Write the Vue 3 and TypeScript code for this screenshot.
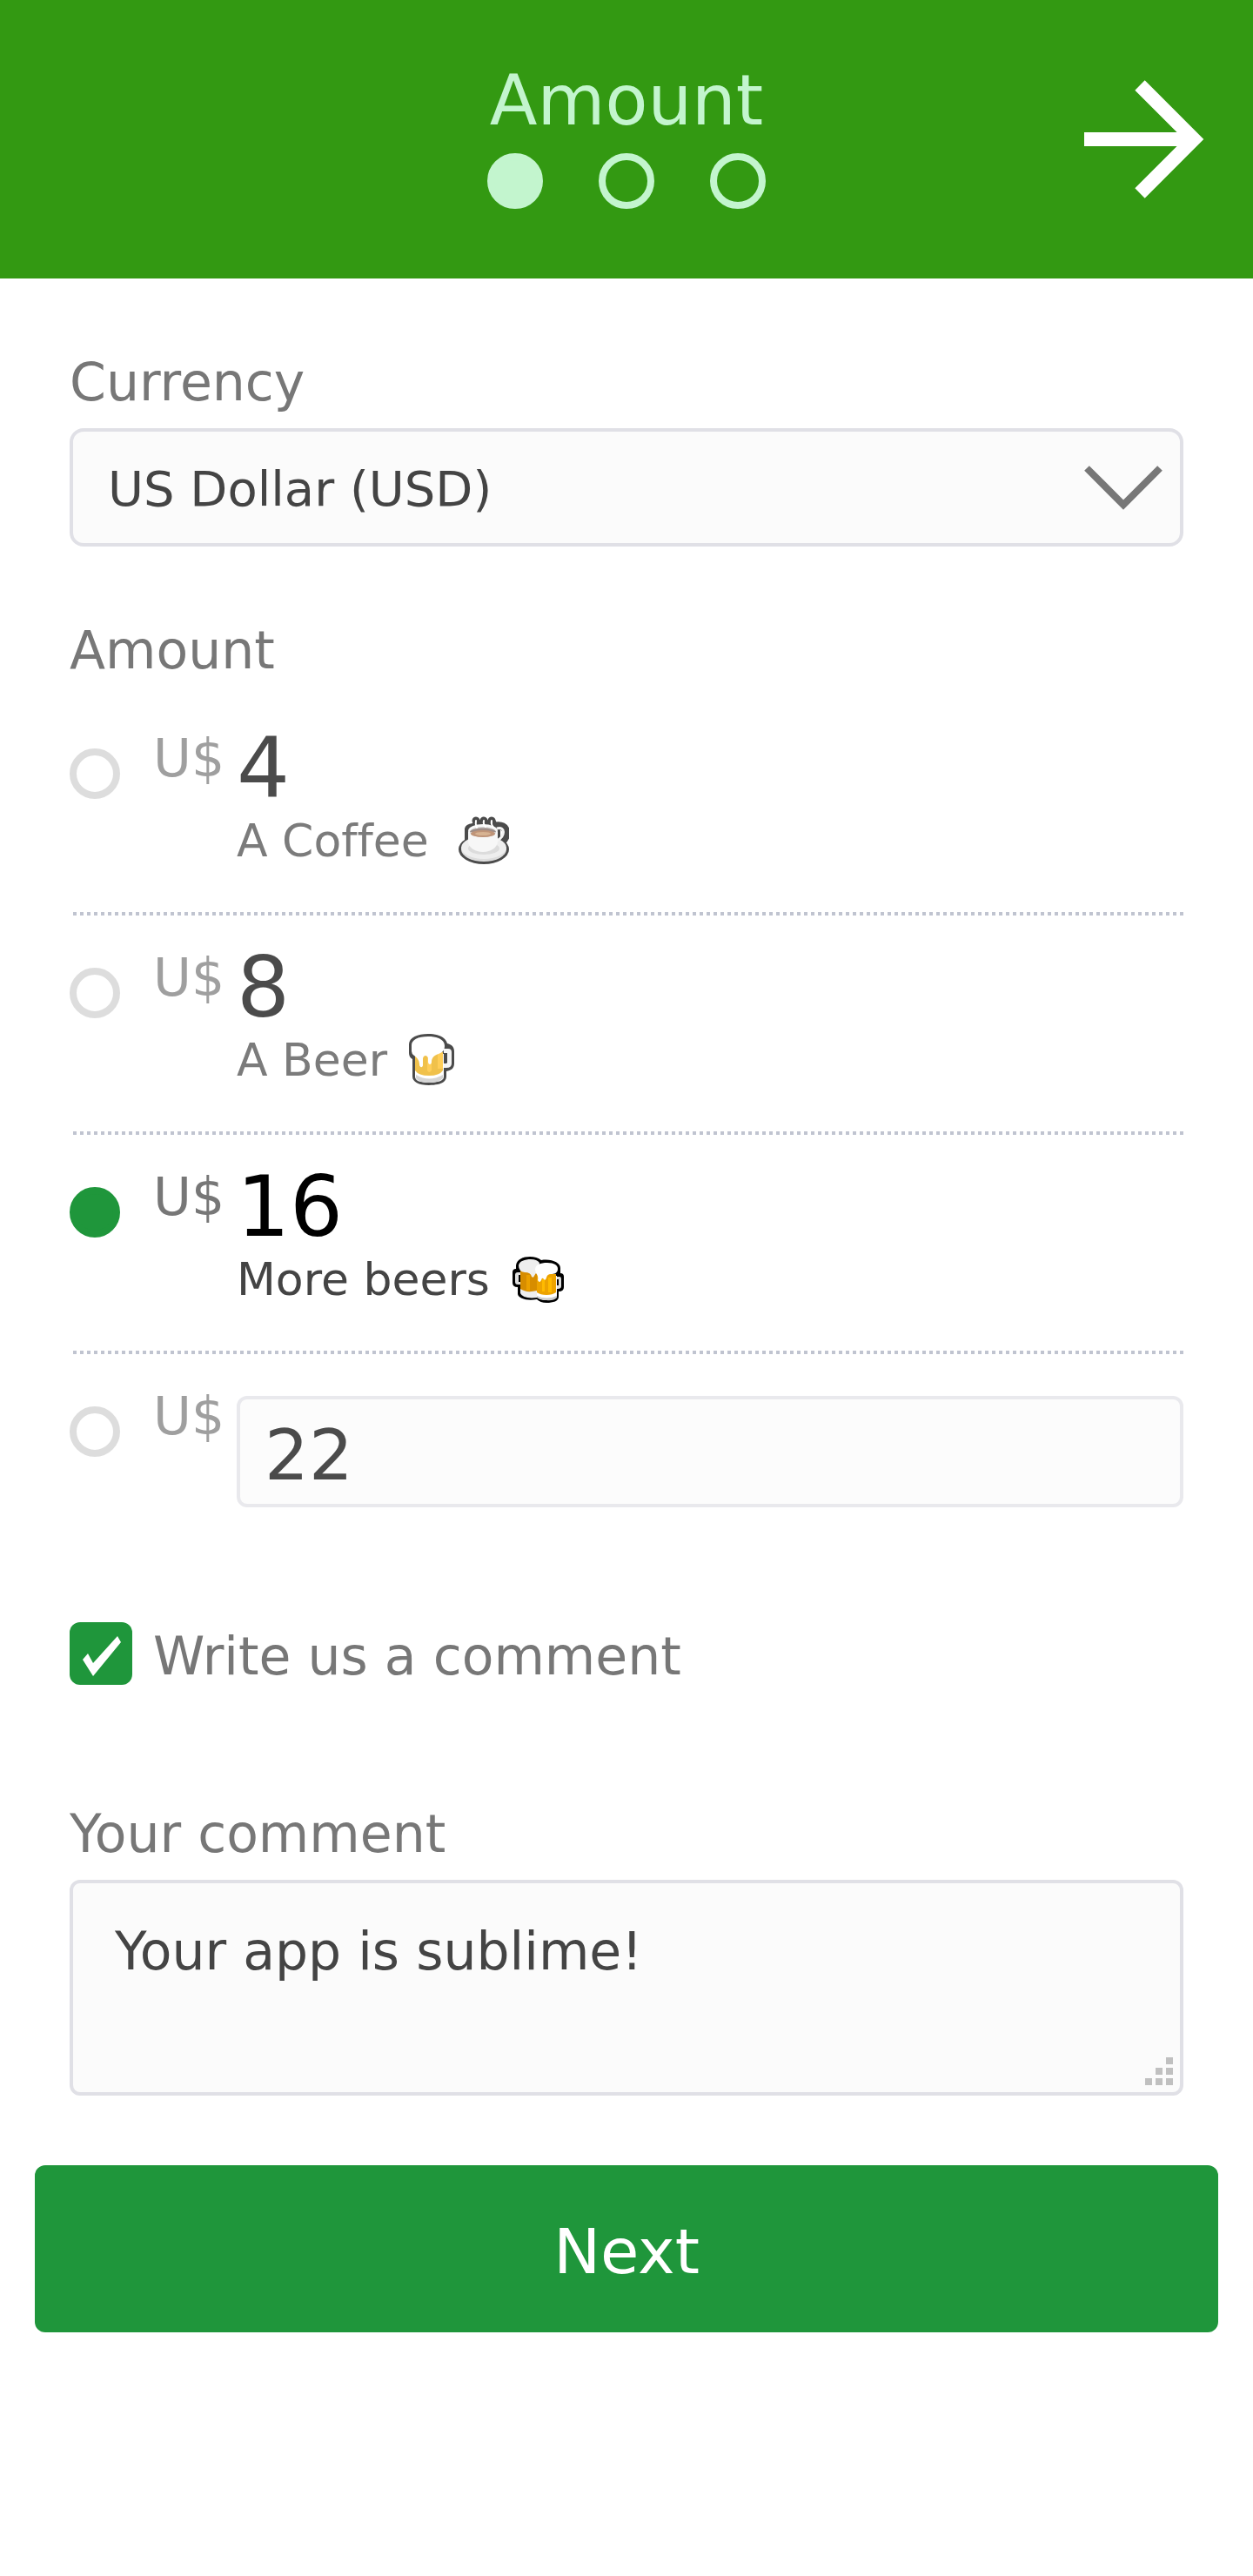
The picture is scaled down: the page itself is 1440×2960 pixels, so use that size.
<script setup lang="ts">
import { ref } from 'vue'

interface Tier {
  value: string
  caption: string
  icon: 'coffee' | 'beer' | 'beers'
}

const steps = ['Amount', 'Details', 'Payment']
const currentStep = ref(0)

const tiers: Tier[] = [
  { value: '4', caption: 'A Coffee', icon: 'coffee' },
  { value: '8', caption: 'A Beer', icon: 'beer' },
  { value: '16', caption: 'More beers', icon: 'beers' },
]

const currency = ref('USD')
const selected = ref('16')
const customAmount = ref('22')
const wantsComment = ref(true)
const comment = ref('Your app is sublime!')
</script>

<template>
  <div class="page">
    <header class="header">
      <div class="progress">
        <h1 class="title">{{ steps[currentStep] }}</h1>
        <div class="dots">
          <span
            v-for="(step, i) in steps"
            :key="step"
            class="dot"
            :class="{ active: i === currentStep }"
          ></span>
        </div>
      </div>
      <button class="forward" type="button" aria-label="Next step">
        <svg viewBox="0 0 138 136" width="138" height="136" aria-hidden="true">
          <path
            d="M0 68H124M64 6L126 68L64 130"
            fill="none"
            stroke="#fff"
            stroke-width="16"
          />
        </svg>
      </button>
    </header>

    <form class="form" @submit.prevent>
      <div class="fields">
        <label class="label" for="currency">Currency</label>
        <div class="select-wrap">
          <select id="currency" v-model="currency" class="select">
            <option value="USD">US Dollar (USD)</option>
          </select>
          <svg class="chevron" viewBox="0 0 90 52" width="90" height="52" aria-hidden="true">
            <path d="M3 3L45 45L87 3" fill="none" stroke="#777" stroke-width="8" />
          </svg>
        </div>

        <div class="amounts" role="radiogroup" aria-labelledby="amount-label">
          <div id="amount-label" class="label">Amount</div>

          <label
            v-for="tier in tiers"
            :key="tier.value"
            class="row"
            :class="{ chosen: selected === tier.value }"
          >
            <input v-model="selected" class="radio" type="radio" name="amount" :value="tier.value" />
            <span class="unit">U$</span>
            <span class="detail">
              <span class="number">{{ tier.value }}</span>
              <span class="caption">
                {{ tier.caption }}
                <svg v-if="tier.icon === 'coffee'" class="emoji" viewBox="0 0 72 72" aria-hidden="true">
                  <g fill="none" stroke="#000" stroke-width="9" stroke-linecap="round">
                    <path d="M34 11L37 20M43 11L45 20M52 11L55 20" />
                    <path d="M57 17C70 15 72 27 64 35L56 40" />
                  </g>
                  <path d="M21 20Q22 15 30 14H54Q62 17 62 23V36H21Z" />
                  <ellipse cx="43" cy="44" rx="29" ry="17" />
                  <ellipse cx="43" cy="44" rx="26" ry="14" fill="#cfcfcf" />
                  <ellipse cx="43" cy="42" rx="26" ry="13" fill="#e8e8e8" />
                  <ellipse cx="43" cy="43" rx="18" ry="7" fill="#cecece" />
                  <path d="M58 20C68 17 68 29 58 34" fill="none" stroke="#eee" stroke-width="3" />
                  <path d="M25 24V34C25 42 33 47 42 47S59 42 59 34V24Z" fill="#f4f4f4" />
                  <ellipse cx="42" cy="23" rx="17" ry="8" fill="#f7f7f7" />
                  <ellipse cx="42" cy="24" rx="15" ry="6" fill="#bdbdbd" />
                  <path d="M27 24C29 18 55 18 57 24Z" fill="#765e55" />
                  <ellipse cx="42" cy="26" rx="14" ry="4" fill="#a56740" />
                  <ellipse cx="42" cy="26" rx="9" ry="2" fill="#c79365" />
                  <path
                    d="M34 11Q33 15 35 19M43 11Q42 15 45 18M52 11Q51 15 54 19"
                    fill="none"
                    stroke="#fff"
                    stroke-width="2"
                    stroke-linecap="round"
                  />
                </svg>
                <svg v-else-if="tier.icon === 'beer'" class="emoji" viewBox="0 0 72 72" aria-hidden="true">
                  <path
                    d="M5 16C5 8 15 4 27 4S47 8 49 15C54 16 57 19 57 24V38C57 44 53 46 48 47V53C48 60 40 63 28 63S9 59 9 53V33Q5 31 5 26Z"
                  />
                  <path d="M45 21H50Q54 21 54 25V38Q54 43 48 43H45V38H48Q49 38 49 36V26H45Z" fill="#f2f2f2" />
                  <rect x="45" y="26" width="4" height="11" />
                  <path d="M12 27H45V53C45 58 38 60 28 60S12 58 12 53Z" fill="#fff" />
                  <path d="M13 51Q28 60 44 51V55Q40 60 28 60T13 55Z" fill="#c4c4c4" />
                  <path d="M12 25H44V46Q40 52 28 52T12 46Z" fill="#eaa800" />
                  <path d="M26 32H31V46Q28 50 26 46ZM38 26H44V44H38Z" fill="#ffba13" />
                  <path
                    d="M8 17C8 11 15 7 27 7S46 11 46 18C46 24 42 26 39 27C35 28 31 31 31 36C31 40 27 40 27 36V32C26 28 22 28 21 32V40C21 43 17 43 17 39C17 34 14 31 11 29Q8 27 8 24Z"
                    fill="#fff"
                  />
                </svg>
                <svg v-else class="emoji" viewBox="0 0 72 72" aria-hidden="true">
                  <path
                    d="M10 18C11 11 18 8 26 8Q34 8 39 12C51 10 61 15 61 21V27Q65 27 65 31V43Q65 48 59 48V54C59 59 53 61 45 61Q38 61 34 57C22 59 13 56 12 51V43Q6 43 6 38V26Q6 22 10 22Z"
                  />
                  <path d="M15 26H12Q9 26 9 29V37Q9 40 12 40H15V37H13V29H15ZM56 31H60Q62 31 62 34V42Q62 45 58 45H56V41H59V34H56Z" fill="#ddd" />
                  <path d="M15 25H35V55Q18 57 15 50Z" fill="#eee" />
                  <path d="M15 24H34V47Q22 50 15 45Z" fill="#d78d00" />
                  <path d="M22 29H26V47H22Z" fill="#eba000" />
                  <path d="M13 18C14 13 20 11 27 11Q34 11 37 15L35 26Q32 27 31 30Q30 33 28 31Q27 26 20 26Q13 25 13 18Z" fill="#eee" />
                  <path d="M34 30H57V54Q54 58 45 58T34 54Z" fill="#fff" />
                  <path d="M34 53Q45 58 57 53V55Q53 59 45 58T34 55Z" fill="#ccc" />
                  <path d="M34 28H56V49Q52 52 45 52T34 49Z" fill="#eda300" />
                  <path d="M47 32H51V49H47ZM40 34H43V48H40Z" fill="#ffba00" />
                  <path
                    d="M32 23C32 17 38 15 46 15S58 18 58 22C58 27 54 28 50 28Q46 28 45 32Q44 36 42 34Q40 31 39 35Q37 39 35 35Q36 30 33 27Z"
                    fill="#fff"
                  />
                </svg>
              </span>
            </span>
          </label>

          <div class="row last" :class="{ chosen: selected === 'custom' }">
            <input
              id="custom-radio"
              v-model="selected"
              class="radio"
              type="radio"
              name="amount"
              value="custom"
              aria-label="Other amount"
            />
            <label class="unit" for="custom-radio">U$</label>
            <input
              v-model="customAmount"
              class="custom"
              type="text"
              inputmode="decimal"
              aria-label="Custom amount"
            />
          </div>
        </div>

        <label class="check">
          <input v-model="wantsComment" class="checkbox" type="checkbox" />
          <span class="check-text">Write us a comment</span>
        </label>

        <template v-if="wantsComment">
          <label class="label" for="comment">Your comment</label>
          <div class="textarea-wrap">
            <textarea id="comment" v-model="comment" class="textarea"></textarea>
            <svg class="grip" viewBox="0 0 32 32" width="32" height="32" aria-hidden="true">
              <path
                d="M24 0h8v8h-8zM12 12h8v8h-8zM24 12h8v8h-8zM0 24h8v8H0zM12 24h8v8h-8zM24 24h8v8h-8z"
                fill="#c0c0c0"
              />
            </svg>
          </div>
        </template>
      </div>

      <button class="next" type="submit">Next</button>
    </form>
  </div>
</template>

<style>
body {
  margin: 0;
  background: #fff;
}
</style>

<style scoped>
.page,
.page button,
.page input,
.page select,
.page textarea {
  font-family: 'DejaVu Sans', Verdana, sans-serif;
}

.page * {
  box-sizing: border-box;
}

.header {
  display: grid;
  grid-template-columns: 1fr auto 1fr;
  min-height: 320px;
  background: #339912;
}

.progress {
  grid-column: 2;
  padding-top: 68px;
}

.title {
  margin: 0 0 12px;
  font-size: 80px;
  line-height: 96px;
  font-weight: 400;
  text-align: center;
  color: #c3f5ce;
}

.dots {
  display: flex;
  justify-content: center;
  gap: 64px;
}

.dot {
  width: 64px;
  height: 64px;
  border: 8px solid #c3f5ce;
  border-radius: 50%;
}

.dot.active {
  background: #c3f5ce;
}

.forward {
  justify-self: end;
  align-self: center;
  display: flex;
  margin-right: 56px;
  padding: 0;
  border: 0;
  background: none;
  cursor: pointer;
}

.form {
  padding: 84px 40px;
}

.fields {
  padding: 0 40px;
}

.label {
  display: block;
  margin-bottom: 18px;
  font-size: 60px;
  line-height: 70px;
  color: #777;
}

.select-wrap,
.textarea-wrap {
  position: relative;
}

.select {
  display: block;
  width: 100%;
  height: 136px;
  margin: 0;
  padding: 2px 120px 0 40px;
  appearance: none;
  border: 4px solid #e0e0e6;
  border-radius: 16px;
  background: #fbfbfb;
  font-size: 56px;
  color: #444;
}

.chevron {
  position: absolute;
  top: 43px;
  right: 24px;
  pointer-events: none;
}

.amounts {
  margin-top: 84px;
}

.row {
  display: grid;
  grid-template-columns: 96px 96px 1fr;
  align-items: start;
  height: 252px;
  padding-top: 28px;
}

.row > * {
  opacity: 0.7;
}

.row.chosen > * {
  opacity: 1;
}

.row:not(.last) {
  background: repeating-linear-gradient(to right, transparent 0 4px, #c0c4d0 4px 8px) bottom / 100% 4px no-repeat;
}

.row.last {
  height: auto;
}

.radio {
  width: 58px;
  height: 58px;
  margin: 32px 0 0;
  appearance: none;
  border: 8px solid #cecece;
  border-radius: 50%;
}

.radio:checked {
  border-color: #1f963b;
  background: #1f963b;
}

.unit {
  margin-top: 8px;
  font-size: 60px;
  line-height: 70px;
  color: #777;
}

.detail {
  display: flex;
  flex-direction: column;
}

.number {
  font-size: 96px;
  line-height: 110px;
  color: #000;
}

.caption {
  display: flex;
  gap: 20px;
  font-size: 52px;
  line-height: 56px;
  font-variant-ligatures: none;
  color: #444;
}

.emoji {
  width: 72px;
  height: 72px;
  margin-top: -6px;
}

.custom {
  width: 100%;
  height: 128px;
  margin: 20px 0 0;
  padding: 8px 28px 0;
  border: 4px solid #e0e0e6;
  border-radius: 12px;
  background: #fbfbfb;
  font-size: 80px;
  color: #000;
}

.check {
  display: flex;
  align-items: flex-start;
  gap: 24px;
  margin: 132px 0 134px;
}

.checkbox {
  flex: none;
  width: 72px;
  height: 72px;
  margin: 0;
  appearance: none;
  border-radius: 12px;
  background: #ddd;
}

.checkbox:checked {
  background: #1f963b;
}

.checkbox:checked::before {
  content: '';
  display: block;
  width: 72px;
  height: 72px;
  background: #fff;
  clip-path: polygon(55px 16px, 59px 23px, 27px 62px, 15px 43px, 21px 36px, 27px 47px);
}

.check-text {
  padding-top: 4px;
  font-size: 60px;
  line-height: 70px;
  color: #777;
}

.textarea {
  display: block;
  width: 100%;
  height: 248px;
  margin: 0;
  padding: 44px 48px;
  resize: none;
  overflow: hidden;
  border: 4px solid #e0e0e6;
  border-radius: 12px;
  background: #fbfbfb;
  font-size: 60px;
  line-height: 68px;
  color: #444;
}

.grip {
  position: absolute;
  right: 12px;
  bottom: 12px;
  pointer-events: none;
}

.next {
  display: block;
  width: 100%;
  height: 192px;
  margin-top: 80px;
  padding: 6px 0 0;
  border: 0;
  border-radius: 12px;
  background: #1f963b;
  font-size: 72px;
  color: #fff;
  cursor: pointer;
}
</style>
